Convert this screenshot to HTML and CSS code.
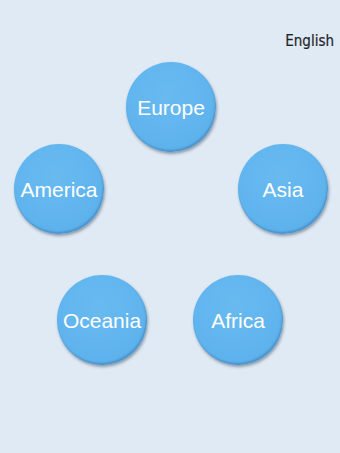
FILE: index.html
```html
<!DOCTYPE html>
<html>
<head>
<meta charset="utf-8">
<link rel="stylesheet" href="styles.css">
</head>
<body>
<div class="page">
  <header class="header"><span class="lang">English</span></header>
  <div class="row row-top">
    <div class="bubble">Europe</div>
  </div>
  <div class="row row-mid">
    <div class="bubble">America</div>
    <div class="bubble">Asia</div>
  </div>
  <div class="row row-bottom">
    <div class="bubble">Oceania</div>
    <div class="bubble">Africa</div>
  </div>
</div>
</body>
</html>
```

FILE: styles.css
```css
html, body {
  margin: 0;
  padding: 0;
}
body {
  background: #dfeaf4;
  width: 340px;
  height: 453px;
  overflow: hidden;
}
.page {
  display: flex;
  flex-direction: column;
}
.header {
  display: flex;
  justify-content: flex-end;
  padding: 31px 6px 0 0;
  height: 21px;
}
.lang {
  font-family: "DejaVu Sans Condensed", "DejaVu Sans", sans-serif;
  font-size: 15px;
  line-height: 21px;
  color: #1f252b;
  -webkit-text-stroke: 0.2px #1f252b;
}
.row {
  display: flex;
}
.row-top {
  justify-content: center;
  margin-top: 10px;
  padding-left: 2px;
}
.row-mid {
  justify-content: space-between;
  margin-top: -8px;
  padding: 0 12px 0 14px;
}
.row-bottom {
  justify-content: flex-start;
  gap: 46px;
  margin-top: 41px;
  padding-left: 57px;
}
.bubble {
  width: 90px;
  height: 90px;
  border-radius: 50%;
  box-sizing: border-box;
  padding-top: 2px;
  display: flex;
  align-items: center;
  justify-content: center;
  font-family: "Liberation Sans", Arial, sans-serif;
  font-size: 21px;
  color: #ffffff;
  background: radial-gradient(circle at 45% 35%, #68baf0 0%, #60b4ee 60%, #58ade8 100%);
  box-shadow: inset -1px -2px 2px rgba(40, 90, 140, 0.35), 1px 2px 3px rgba(40, 60, 80, 0.45);
}
```
